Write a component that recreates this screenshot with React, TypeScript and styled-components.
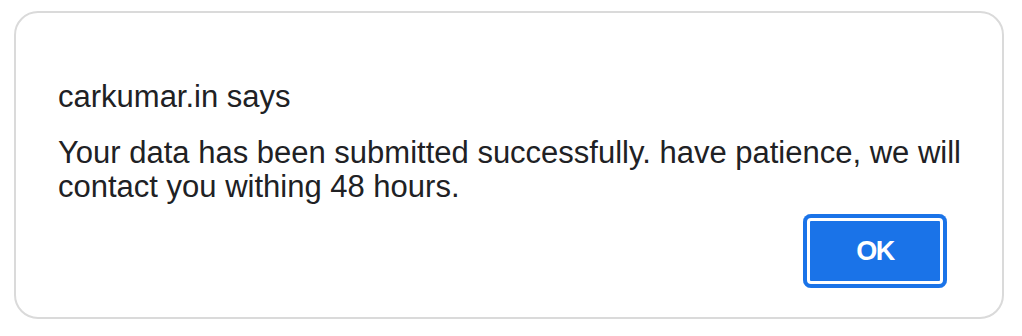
import React from "react";
import styled, { createGlobalStyle } from "styled-components";

const GlobalStyle = createGlobalStyle`
  html, body {
    margin: 0;
    padding: 0;
    background: #ffffff;
  }
  body {
    font-family: "Liberation Sans", Arial, sans-serif;
  }
`;

const Page = styled.div`
  width: 1022px;
  height: 336px;
  padding: 11px 18px 17px 14px;
  box-sizing: border-box;
`;

const Dialog = styled.div`
  height: 100%;
  box-sizing: border-box;
  border: 2px solid #dadada;
  border-radius: 24px;
  padding: 68px 40px 0 42px;
  display: flex;
  flex-direction: column;
`;

const Title = styled.div`
  font-size: 31px;
  line-height: 32px;
  color: #202124;
`;

const Message = styled.div`
  margin-top: 23px;
  font-size: 31px;
  line-height: 34px;
  color: #202124;
  white-space: nowrap;
`;

const Actions = styled.div`
  display: flex;
  justify-content: flex-end;
  margin-top: 10px;
  padding-right: 15px;
`;

const OkButton = styled.button`
  width: 144px;
  height: 74px;
  border: none;
  border-radius: 8px;
  background: #1a73e8;
  box-shadow: inset 0 0 0 4px #1a73e8, inset 0 0 0 7px #ffffff;
  color: #ffffff;
  font-family: "Liberation Sans", Arial, sans-serif;
  font-weight: 700;
  font-size: 27px;
  letter-spacing: -1.5px;
  cursor: pointer;
`;

export default function App() {
  return (
    <>
      <GlobalStyle />
      <Page>
        <Dialog>
          <Title>carkumar.in says</Title>
          <Message>
            Your data has been submitted successfully. have patience, we will
            <br />
            contact you withing 48 hours.
          </Message>
          <Actions>
            <OkButton>OK</OkButton>
          </Actions>
        </Dialog>
      </Page>
    </>
  );
}
